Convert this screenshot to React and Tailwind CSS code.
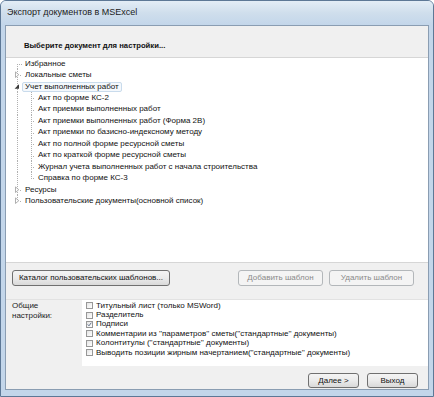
import React from "react";

const H = 11.45;

function RootGutter({ type, last }) {
  const cy = 5.7;
  const line = { stroke: "#b0b0b0", strokeWidth: 1, strokeDasharray: "1 1", shapeRendering: "crispEdges" };
  return (
    <svg width="16" height={H} viewBox={`0 0 16 ${H}`} className="shrink-0">
      {type === "first" && (
        <>
          <line x1="11.5" y1={cy} x2="11.5" y2={H} {...line} />
          <line x1="11.5" y1={cy + 0.5} x2="16" y2={cy + 0.5} {...line} />
        </>
      )}
      {type === "collapsed" && (
        <>
          <line x1="11.5" y1="0" x2="11.5" y2={last ? cy : H} {...line} />
          <line x1="14" y1={cy + 0.5} x2="16" y2={cy + 0.5} {...line} />
          <polygon points={`9.5,${cy - 2.8} 9.5,${cy + 2.8} 12.8,${cy}`} fill="#fff" stroke="#a6a6a6" strokeWidth="0.9" />
        </>
      )}
      {type === "expanded" && (
        <>
          <line x1="11.5" y1="0" x2="11.5" y2={H} {...line} />
          <polygon points={`13,${cy - 2.4} 13,${cy + 2} 8.6,${cy + 2}`} fill="#3a3a3a" />
        </>
      )}
    </svg>
  );
}

function ChildGutter({ last }) {
  const cy = 5.7;
  const line = { stroke: "#b0b0b0", strokeWidth: 1, strokeDasharray: "1 1", shapeRendering: "crispEdges" };
  return (
    <svg width="29" height={H} viewBox={`0 0 29 ${H}`} className="shrink-0">
      <line x1="11.5" y1="0" x2="11.5" y2={H} {...line} />
      <line x1="25.5" y1="0" x2="25.5" y2={last ? cy : H} {...line} />
      <line x1="25.5" y1={cy + 0.5} x2="29" y2={cy + 0.5} {...line} />
    </svg>
  );
}

const children = [
  "Акт по форме КС-2",
  "Акт приемки выполненных работ",
  "Акт приемки выполненных работ (Форма 2В)",
  "Акт приемки по базисно-индексному методу",
  "Акт по полной форме ресурсной сметы",
  "Акт по краткой форме ресурсной сметы",
  "Журнал учета выполненных работ с начала строительства",
  "Справка по форме КС-3",
];

function Row({ gutter, text, selected }) {
  return (
    <div className="flex items-center h-[11.45px]">
      {gutter}
      <span
        className={
          "flex items-center h-[10px] px-[2px] border rounded-[2px] whitespace-nowrap " +
          (selected ? "border-[#c9dbec] bg-[#f4f8fc]" : "border-transparent")
        }
      >
        {text}
      </span>
    </div>
  );
}

function Checkbox({ checked }) {
  return (
    <span className="w-[7px] h-[7px] border border-[#979797] bg-gradient-to-br from-[#e4e4e4] to-[#ffffff] flex items-center justify-center shrink-0">
      {checked && (
        <svg width="7" height="7" viewBox="0 0 7 7">
          <path d="M1 3.4 L2.8 5.3 L6 1" fill="none" stroke="#3c4f70" strokeWidth="1.1" />
        </svg>
      )}
    </span>
  );
}

const options = [
  ["Титульный лист (только MSWord)", false],
  ["Разделитель", false],
  ["Подписи", true],
  ["Комментарии из ''параметров'' сметы(''стандартные'' документы)", false],
  ["Колонтитулы (''стандартные'' документы)", false],
  ["Выводить позиции жирным начертанием(''стандартные'' документы)", false],
];

export default function App() {
  return (
    <div className="w-[434px] h-[397px] overflow-hidden bg-[#c3d6ea] border border-[#5d7896] rounded-t-[6px] flex flex-col font-['Liberation_Sans',Arial,sans-serif] text-[8px] text-[#111]">
      <div className="h-[24px] shrink-0 flex items-center pl-[6px] text-[9px] text-[#1b1b1b] bg-gradient-to-b from-[#e3edf6] via-[#cfdeec] to-[#c3d6ea]">
        Экспорт документов в MSExcel
      </div>
      <div className="flex-1 mx-[4px] mb-[6px] border border-[#8a9db2] bg-[#f0f0f0] flex flex-col">
        <div className="h-[31px] shrink-0 flex items-end pb-[5px] pl-[18px] font-bold text-[7.7px] text-[#111]">
          Выберите документ для настройки...
        </div>
        <div className="h-[206px] shrink-0 bg-white border-t border-b border-[#d6d6d6] flex flex-col">
          <Row gutter={<RootGutter type="first" />} text="Избранное" />
          <Row gutter={<RootGutter type="collapsed" />} text="Локальные сметы" />
          <Row gutter={<RootGutter type="expanded" />} text="Учет выполненных работ" selected />
          {children.map((c, i) => (
            <Row key={c} gutter={<ChildGutter last={i === children.length - 1} />} text={c} />
          ))}
          <Row gutter={<RootGutter type="collapsed" />} text="Ресурсы" />
          <Row gutter={<RootGutter type="collapsed" last />} text="Пользовательские документы(основной список)" />
        </div>
        <div className="flex items-center pt-[7px] pl-[6px] pr-[14px] h-[23px] shrink-0">
          <button className="h-[16px] w-[158px] rounded-[3px] border border-[#707070] bg-gradient-to-b from-[#f4f4f4] via-[#ebebeb] to-[#d9d9d9] text-[8px] text-[#111] flex items-center justify-center">
            Каталог пользовательских шаблонов...
          </button>
          <div className="flex-1" />
          <button className="h-[16px] w-[85px] rounded-[3px] border border-[#b3b7ba] bg-[#f4f4f4] text-[8px] text-[#8a8a8a] flex items-center justify-center">
            Добавить шаблон
          </button>
          <button className="ml-[6px] h-[16px] w-[85px] rounded-[3px] border border-[#b3b7ba] bg-[#f4f4f4] text-[8px] text-[#8a8a8a] flex items-center justify-center">
            Удалить шаблон
          </button>
        </div>
        <div className="mt-[13px] border-t border-[#e2e2e2] flex">
          <div className="w-[76px] shrink-0 pl-[6px] pt-[1px] leading-[9.5px] text-[#222]">
            <div>Общие</div>
            <div>настройки:</div>
          </div>
          <div className="flex-1 bg-white pt-[1px] pb-[9px] flex flex-col">
            {options.map(([t, c]) => (
              <div key={t} className="h-[9.4px] flex items-center pl-[4px]">
                <Checkbox checked={c} />
                <span className="ml-[3px] whitespace-nowrap">{t}</span>
              </div>
            ))}
          </div>
        </div>
        <div className="flex justify-end items-center pt-[7px] pr-[10px] gap-[8px]">
          <button className="h-[15px] w-[51px] rounded-[3px] border border-[#707070] bg-gradient-to-b from-[#f4f4f4] via-[#ebebeb] to-[#d9d9d9] text-[8px] text-[#111] flex items-center justify-center">
            Далее &gt;
          </button>
          <button className="h-[15px] w-[51px] rounded-[3px] border border-[#707070] bg-gradient-to-b from-[#f4f4f4] via-[#ebebeb] to-[#d9d9d9] text-[8px] text-[#111] flex items-center justify-center">
            Выход
          </button>
        </div>
      </div>
    </div>
  );
}
